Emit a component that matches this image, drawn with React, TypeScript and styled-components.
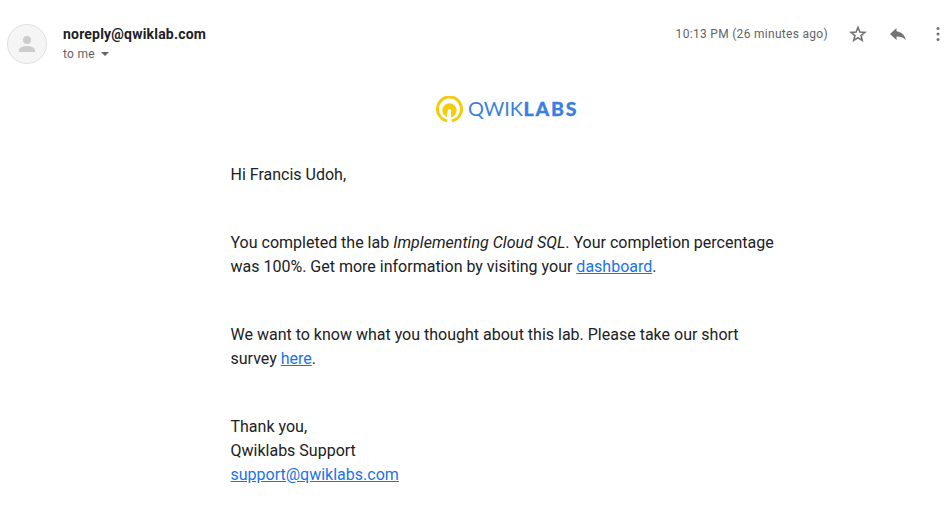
import React from "react";
import styled, { createGlobalStyle } from "styled-components";

const GlobalStyle = createGlobalStyle`
  body { margin: 0; background: #fff; font-family: Roboto, sans-serif; color: #202124; overflow: hidden; -webkit-font-smoothing: antialiased; }
`;
const Message = styled.article`
  width: 952px;
  height: 514px;
  overflow: hidden;
`;
const Header = styled.header`
  display: flex;
  align-items: flex-start;
  height: 72px;
  padding: 24px 0 0 7px;
  box-sizing: border-box;
`;
const Avatar = styled.div`
  width: 40px;
  height: 40px;
  box-sizing: border-box;
  border: 1px solid #e0e0e0;
  border-radius: 50%;
  background: #f5f5f5;
  display: grid;
  place-items: center;
`;
const Sender = styled.div`
  flex: 1;
  margin-left: 16px;
`;
const Address = styled.div`
  font-size: 14px;
  font-weight: 700;
  line-height: 20px;
  letter-spacing: 0.2px;
`;
const Recipient = styled.div`
  display: flex;
  align-items: center;
  gap: 6px;
  font-size: 12px;
  line-height: 20px;
  letter-spacing: 0.3px;
  color: #5f6368;
`;
const Caret = styled.span`
  border: 4px solid transparent;
  border-top-color: #5f6368;
  border-bottom: 0;
`;
const Time = styled.time`
  font-size: 12px;
  line-height: 20px;
  letter-spacing: 0.3px;
  color: #5f6368;
`;
const Actions = styled.div`
  display: flex;
  gap: 20px;
  margin: 0 4px 0 20px;
`;
const Icon = styled.svg`
  width: 20px;
  height: 20px;
  fill: #737373;
  flex: none;
`;
const Brand = styled.div`
  display: flex;
  justify-content: center;
  height: 75px;
  padding: 24px 0 0 60px;
  box-sizing: border-box;
`;
const Body = styled.div`
  width: 550px;
  margin-left: 230.5px;
  padding-top: 16px;
  font-size: 16px;
  line-height: 24px;
`;
const Paragraph = styled.p`
  margin: 0 0 44px;
`;
const LabName = styled.em`
  letter-spacing: 0.04px;
`;
const Link = styled.a`
  color: #1a73e8;
  text-decoration: underline;
`;

export default function App() {
  return (
    <Message>
      <GlobalStyle />
      <Header>
        <Avatar>
          <svg width="24" height="24" viewBox="0 0 24 24" fill="#ccc"><path d="M12 12a4 4 0 1 0 0-8 4 4 0 0 0 0 8zm0 2c-2.67 0-8 1.34-8 4v2h16v-2c0-2.66-5.33-4-8-4z" /></svg>
        </Avatar>
        <Sender>
          <Address>noreply@qwiklab.com</Address>
          <Recipient>to me <Caret /></Recipient>
        </Sender>
        <Time>10:13 PM (26 minutes ago)</Time>
        <Actions>
          <Icon viewBox="0 0 20 20"><path d="M10 3.300l1.850 4.650 5 .4-3.800 3.200 1.200 4.850L10 13.800l-4.250 2.600 1.200-4.850-3.800-3.200 5-.4z" fill="none" stroke="#737373" strokeWidth="1.600" /></Icon>
          <Icon viewBox="0 0 20 20"><path d="M8.500 7.200V4L2 10l6.500 6v-3.600c4.300 0 7.200 1 9.400 3.900-.8-4.300-3.500-8.300-9.400-9.100z" /></Icon>
          <Icon viewBox="0 0 20 20"><circle cx="10" cy="4.500" r="1.500" /><circle cx="10" cy="10" r="1.500" /><circle cx="10" cy="15.500" r="1.500" /></Icon>
        </Actions>
      </Header>
      <Brand>
        <svg width="142" height="28" viewBox="0 0 142 28">
          <path d="M12.300 24.850A12 12 0 1 1 16.700 24.850" fill="none" stroke="#f2cc0f" strokeWidth="3" />
          <path d="M11.800 21A7.200 7.200 0 1 1 17.200 21H16V13.500H13z" fill="#f2cc0f" />
          <text x="33" y="19.500" fontFamily="Lato" fontSize="20" fill="#3b80df" textLength="55" lengthAdjust="spacingAndGlyphs">QWIK</text>
          <text x="88.500" y="19.500" fontFamily="Lato" fontWeight="900" fontSize="19.500" fill="#3b80df" stroke="#3b80df" strokeWidth=".3" textLength="53" lengthAdjust="spacing">LABS</text>
        </svg>
      </Brand>
      <Body>
        <Paragraph>Hi Francis Udoh,</Paragraph>
        <Paragraph>You completed the lab <LabName>Implementing Cloud SQL</LabName>. Your completion percentage was 100%. Get more information by visiting your <Link>dashboard</Link>.</Paragraph>
        <Paragraph>We want to know what you thought about this lab. Please take our short survey <Link>here</Link>.</Paragraph>
        <Paragraph>Thank you,<br />Qwiklabs Support<br /><Link>support@qwiklabs.com</Link></Paragraph>
      </Body>
    </Message>
  );
}
